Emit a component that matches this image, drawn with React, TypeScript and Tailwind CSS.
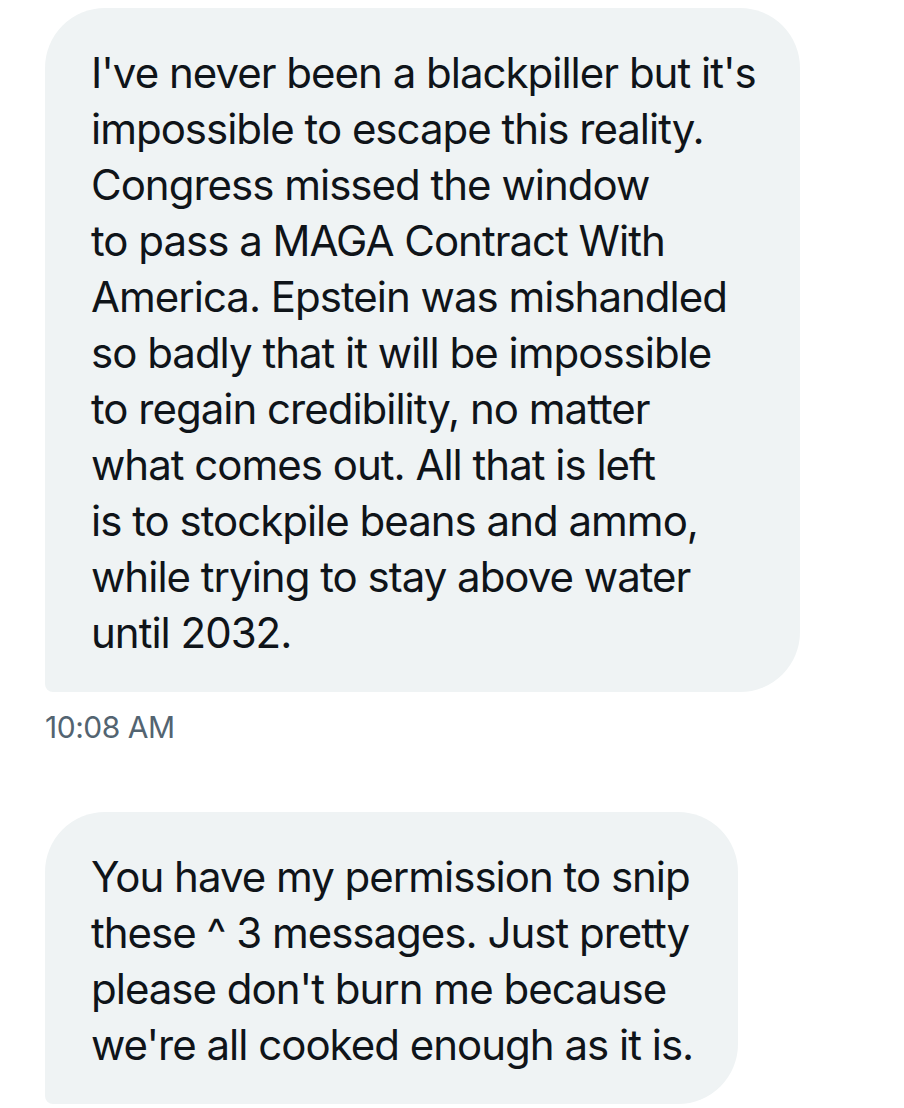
const first = [
  "I've never been a blackpiller but it's",
  "impossible to escape this reality.",
  "Congress missed the window",
  "to pass a MAGA Contract With",
  "America. Epstein was mishandled",
  "so badly that it will be impossible",
  "to regain credibility, no matter",
  "what comes out. All that is left",
  "is to stockpile beans and ammo,",
  "while trying to stay above water",
  "until 2032.",
];

const second = [
  "You have my permission to snip",
  "these ^ 3 messages. Just pretty",
  "please don't burn me because",
  "we're all cooked enough as it is.",
];

function Bubble({ lines, width }: { lines: string[]; width: string }) {
  return (
    <div
      className={`${width} rounded-[60px] rounded-bl-[8px] bg-[#eff3f4] px-[46px] pt-[37px] pb-[31px] text-[42px] leading-[56px] tracking-[-1px] text-[#0f1419]`}
      style={{ fontFamily: "Inter, 'Liberation Sans', sans-serif" }}
    >
      {lines.map((l, i) => (
        <div key={i} className="whitespace-nowrap">
          {l}
        </div>
      ))}
    </div>
  );
}

export default function App() {
  return (
    <div className="min-h-[1108px] w-full bg-white pl-[45px] pt-[8px]">
      <Bubble lines={first} width="w-[755px]" />
      <div
        className="mt-[15px] text-[30px] leading-[40px] tracking-[-0.5px] text-[#536471]"
        style={{ fontFamily: "Inter, 'Liberation Sans', sans-serif" }}
      >
        10:08 AM
      </div>
      <div className="mt-[65px]">
        <Bubble lines={second} width="w-[693px]" />
      </div>
    </div>
  );
}
